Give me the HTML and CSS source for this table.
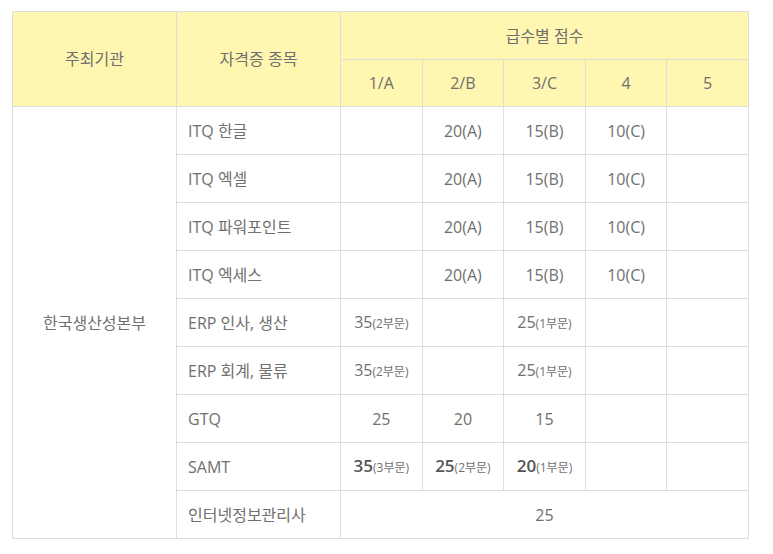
FILE: index.html
```html
<!DOCTYPE html>
<html lang="ko">
<head>
<meta charset="utf-8">
<link rel="stylesheet" href="styles.css">
</head>
<body>
<table class="score">
  <colgroup>
    <col class="c-org"><col class="c-name">
    <col class="c-s"><col class="c-s"><col class="c-s"><col class="c-s"><col class="c-s">
  </colgroup>
  <thead>
    <tr class="h1">
      <th rowspan="2">주최기관</th>
      <th rowspan="2">자격증 종목</th>
      <th colspan="5">급수별 점수</th>
    </tr>
    <tr class="h2">
      <th>1/A</th><th>2/B</th><th>3/C</th><th>4</th><th>5</th>
    </tr>
  </thead>
  <tbody>
    <tr>
      <td rowspan="9" class="org">한국생산성본부</td>
      <td class="name">ITQ 한글</td>
      <td></td><td>20(A)</td><td>15(B)</td><td>10(C)</td><td></td>
    </tr>
    <tr>
      <td class="name">ITQ 엑셀</td>
      <td></td><td>20(A)</td><td>15(B)</td><td>10(C)</td><td></td>
    </tr>
    <tr>
      <td class="name">ITQ 파워포인트</td>
      <td></td><td>20(A)</td><td>15(B)</td><td>10(C)</td><td></td>
    </tr>
    <tr>
      <td class="name">ITQ 엑세스</td>
      <td></td><td>20(A)</td><td>15(B)</td><td>10(C)</td><td></td>
    </tr>
    <tr>
      <td class="name">ERP 인사, 생산</td>
      <td>35<small>(2부문)</small></td><td></td><td>25<small>(1부문)</small></td><td></td><td></td>
    </tr>
    <tr>
      <td class="name">ERP 회계, 물류</td>
      <td>35<small>(2부문)</small></td><td></td><td>25<small>(1부문)</small></td><td></td><td></td>
    </tr>
    <tr>
      <td class="name">GTQ</td>
      <td>25</td><td>20</td><td>15</td><td></td><td></td>
    </tr>
    <tr>
      <td class="name">SAMT</td>
      <td><b>35</b><small>(3부문)</small></td><td><b>25</b><small>(2부문)</small></td><td><b>20</b><small>(1부문)</small></td><td></td><td></td>
    </tr>
    <tr>
      <td class="name">인터넷정보관리사</td>
      <td colspan="5">25</td>
    </tr>
  </tbody>
</table>
</body>
</html>
```

FILE: styles.css
```css
html, body {
  margin: 0;
  padding: 0;
  background: #fff;
}
body {
  padding: 11px 0 0 12px;
  font-family: "Open Sans", "Noto Sans CJK KR", sans-serif;
  font-size: 16px;
  color: #6f6f6f;
}
.score {
  border-collapse: collapse;
  table-layout: fixed;
  width: 737px;
}
.c-org { width: 164px; }
.c-name { width: 164px; }
.score th, .score td {
  border: 1px solid #dddddd;
  padding: 0;
  text-align: center;
  vertical-align: middle;
  line-height: 20px;
}
.score th {
  background: #fff7b1;
  font-weight: 400;
  color: #6f6f6f;
}
.h1 th { height: 47px; }
.h2 th { height: 46px; }
.score td { height: 47px; }
.score td.name {
  text-align: left;
  padding-left: 11px;
}
.score small {
  font-size: 12px;
}
.score b {
  font-size: 17px;
  font-weight: 600;
  color: #555;
}
```
